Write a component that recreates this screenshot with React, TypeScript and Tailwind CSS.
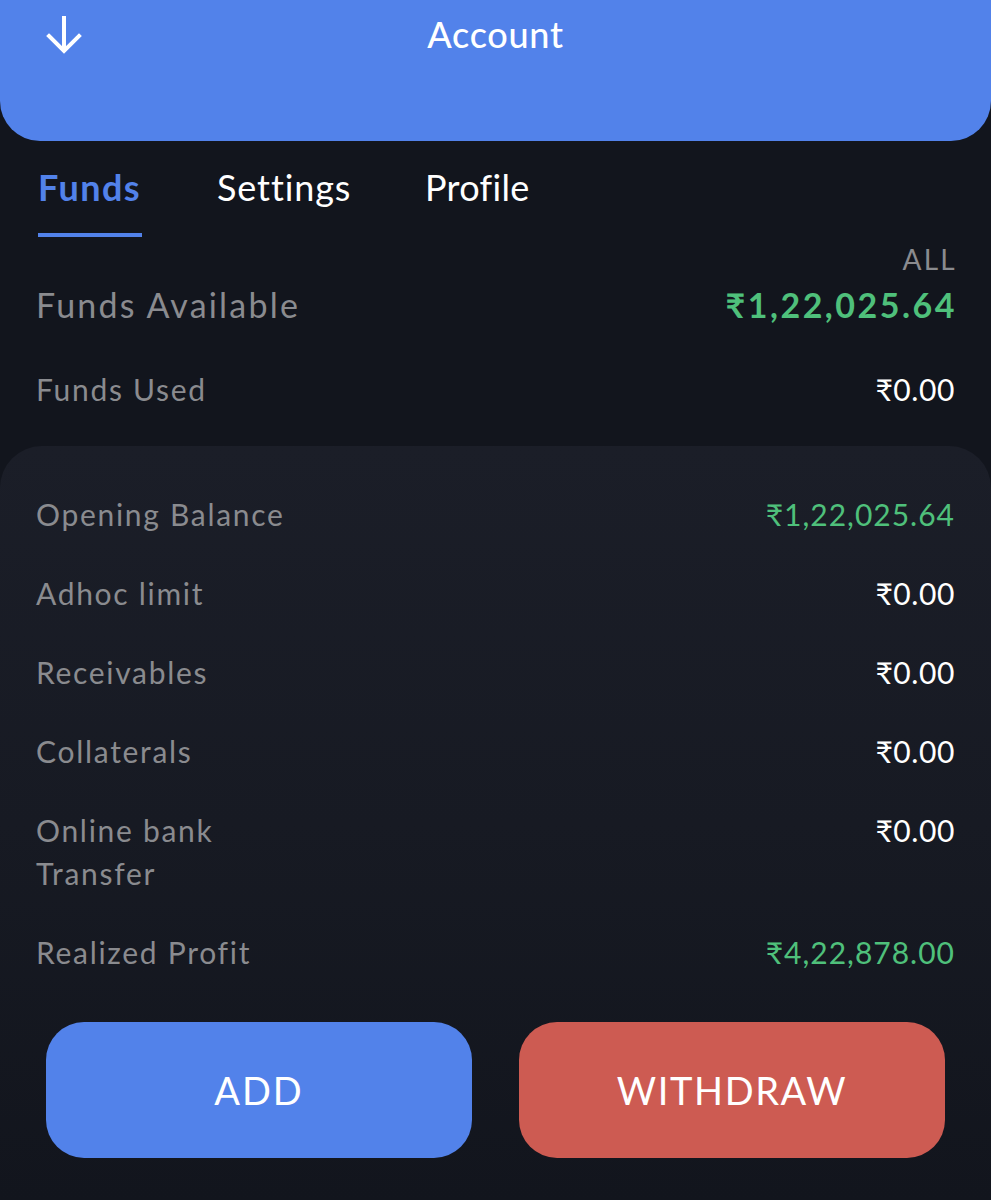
import React from "react";

const font = { fontFamily: 'Lato, "Noto Sans", "DejaVu Sans", sans-serif' };

function Row({ label, value, green }: { label: React.ReactNode; value: string; green?: boolean }) {
  return (
    <div className="flex justify-between items-start text-[30px] leading-[43px]">
      <div className="text-[#8a8b8f] tracking-[1.7px]">{label}</div>
      <div className={green ? "text-[#4fc07b] tracking-[1px]" : "text-white tracking-[0.6px]"}>{value}</div>
    </div>
  );
}

export default function App() {
  return (
    <div style={font} className="w-[991px] h-[1200px] bg-[#12151d] overflow-hidden flex flex-col">
      <header className="h-[141px] bg-[#5282ea] rounded-b-[40px] grid grid-cols-[1fr_auto_1fr] items-start px-[44px] pt-[12px] shrink-0">
        <div className="pt-[2px]">
          <svg width="40" height="42" viewBox="0 0 40 42" fill="none" stroke="white" strokeWidth="4" strokeLinecap="square">
            <path d="M20 4 V36" />
            <path d="M5 22 L20 37 L35 22" strokeLinejoin="miter" />
          </svg>
        </div>
        <div className="text-white text-[36px] leading-[44px] font-medium tracking-[0.7px]">Account</div>
        <div />
      </header>

      <nav className="flex pl-[38px] mt-[24px] text-[36px] leading-[44px]">
        <div className="w-[179px] flex flex-col items-start">
          <span className="text-[#5282ea] font-bold tracking-[1.4px]">Funds</span>
          <span className="mt-[24px] h-[4px] w-[104px] bg-[#5282ea]" />
        </div>
        <div className="w-[208px] text-white tracking-[0.9px]">Settings</div>
        <div className="text-white tracking-[0.3px]">Profile</div>
      </nav>

      <div className="px-[36px]">
        <div className="text-right text-[#8a8b8f] text-[28px] leading-[32px] mt-[6px] tracking-[2.3px] -mr-[2px]">ALL</div>
        <div className="flex justify-between items-center mt-[10px] text-[34px] leading-[40px]">
          <span className="text-[#8a8b8f] tracking-[2.2px]">Funds Available</span>
          <span className="text-[#4fc07b] font-bold tracking-[2.5px] -mr-[2px]">₹1,22,025.64</span>
        </div>
        <div className="flex justify-between items-center mt-[46px] text-[30px] leading-[36px]">
          <span className="text-[#8a8b8f] tracking-[1.7px]">Funds Used</span>
          <span className="text-white tracking-[0.6px]">₹0.00</span>
        </div>
      </div>

      <section className="mt-[39px] flex-1 rounded-t-[42px] bg-gradient-to-b from-[#1b1e28] via-[#171a23] to-[#12151d]">
        <div className="px-[36px] pt-[47px] flex flex-col gap-[36px]">
          <Row label="Opening Balance" value="₹1,22,025.64" green />
          <Row label="Adhoc limit" value="₹0.00" />
          <Row label="Receivables" value="₹0.00" />
          <Row label="Collaterals" value="₹0.00" />
          <Row label={<>Online bank<br />Transfer</>} value="₹0.00" />
          <Row label="Realized Profit" value="₹4,22,878.00" green />
        </div>
        <div className="flex gap-[47px] px-[46px] mt-[48px]">
          <button className="w-[426px] h-[136px] rounded-[38px] bg-[#5282ea] text-white text-[38px] tracking-[2px]">ADD</button>
          <button className="w-[426px] h-[136px] rounded-[38px] bg-[#cd5b52] text-white text-[38px] tracking-[1.6px]">WITHDRAW</button>
        </div>
      </section>
    </div>
  );
}
